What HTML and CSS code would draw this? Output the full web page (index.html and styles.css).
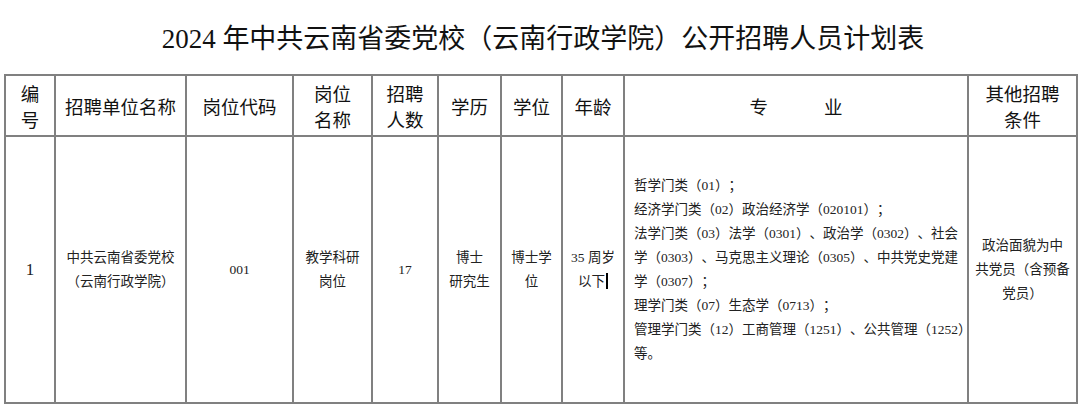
FILE: index.html
```html
<!DOCTYPE html>
<html lang="zh-CN">
<head>
<meta charset="utf-8">
<title>2024 年中共云南省委党校（云南行政学院）公开招聘人员计划表</title>
<link rel="stylesheet" href="styles.css">
</head>
<body>
<div class="page">
  <h1 class="title">2024 年中共云南省委党校（云南行政学院）公开招聘人员计划表</h1>
  <table class="plan">
    <colgroup>
      <col class="c-no">
      <col class="c-unit">
      <col class="c-code">
      <col class="c-post">
      <col class="c-num">
      <col class="c-edu">
      <col class="c-deg">
      <col class="c-age">
      <col class="c-major">
      <col class="c-other">
    </colgroup>
    <thead>
      <tr class="head-row">
        <th>编<br>号</th>
        <th>招聘单位名称</th>
        <th>岗位代码</th>
        <th>岗位<br>名称</th>
        <th>招聘<br>人数</th>
        <th>学历</th>
        <th>学位</th>
        <th>年龄</th>
        <th class="major-h">专<span class="gap"></span>业</th>
        <th>其他招聘<br>条件</th>
      </tr>
    </thead>
    <tbody>
      <tr class="body-row">
        <td class="no">1</td>
        <td>中共云南省委党校<br>（云南行政学院）</td>
        <td>001</td>
        <td>教学科研<br>岗位</td>
        <td>17</td>
        <td>博士<br>研究生</td>
        <td>博士学<br>位</td>
        <td>35 周岁<br>以下<span class="caret"></span></td>
        <td class="major">哲学门类（01）；<br>经济学门类（02）政治经济学（020101）；<br>法学门类（03）法学（0301）、政治学（0302）、社会<br>学（0303）、马克思主义理论（0305）、中共党史党建<br>学（0307）；<br>理学门类（07）生态学（0713）；<br>管理学门类（12）工商管理（1251）、公共管理（1252）<br>等。</td>
        <td>政治面貌为中<br>共党员（含预备<br>党员）</td>
      </tr>
    </tbody>
  </table>
</div>
</body>
</html>
```

FILE: styles.css
```css
html, body {
  margin: 0;
  padding: 0;
  background: #ffffff;
}

.page {
  width: 1080px;
  height: 406px;
  overflow: hidden;
  padding-left: 4px;
  box-sizing: border-box;
  font-family: "Liberation Serif", "Noto Sans CJK SC", sans-serif;
  color: #1a1a1a;
  text-spacing-trim: space-all;
}

.title {
  margin: 0;
  height: 74px;
  line-height: 78px;
  font-size: 27px;
  font-weight: normal;
  text-align: center;
  color: #111;
  padding-left: 2px;
}

.plan {
  border-collapse: collapse;
  table-layout: fixed;
  width: 1072px;
}

.c-no { width: 50px; }
.c-unit { width: 131px; }
.c-code { width: 107px; }
.c-post { width: 79px; }
.c-num { width: 66px; }
.c-edu { width: 63px; }
.c-deg { width: 61px; }
.c-age { width: 62px; }
.c-major { width: 344px; }
.c-other { width: 109px; }

.plan th,
.plan td {
  border: 2px solid #808080;
  padding: 0;
  text-align: center;
  vertical-align: middle;
}

.head-row { height: 61px; }
.body-row { height: 267px; }

.plan th {
  font-family: "Noto Sans CJK SC", sans-serif;
  font-size: 18.5px;
  font-weight: normal;
  line-height: 26px;
  color: #111;
  border-bottom: 1px solid #1a1a1a;
}

.plan .major-h .gap {
  display: inline-block;
  width: 56px;
}

.plan td {
  font-size: 13.5px;
  line-height: 24px;
  color: #222;
}

.plan td.no {
  font-size: 17px;
}

.plan td.major {
  text-align: left;
  white-space: nowrap;
  padding-left: 9px;
}

.caret {
  display: inline-block;
  width: 0;
  height: 16px;
  border-left: 2px solid #000;
  vertical-align: -3px;
  margin-left: 1px;
}
```
